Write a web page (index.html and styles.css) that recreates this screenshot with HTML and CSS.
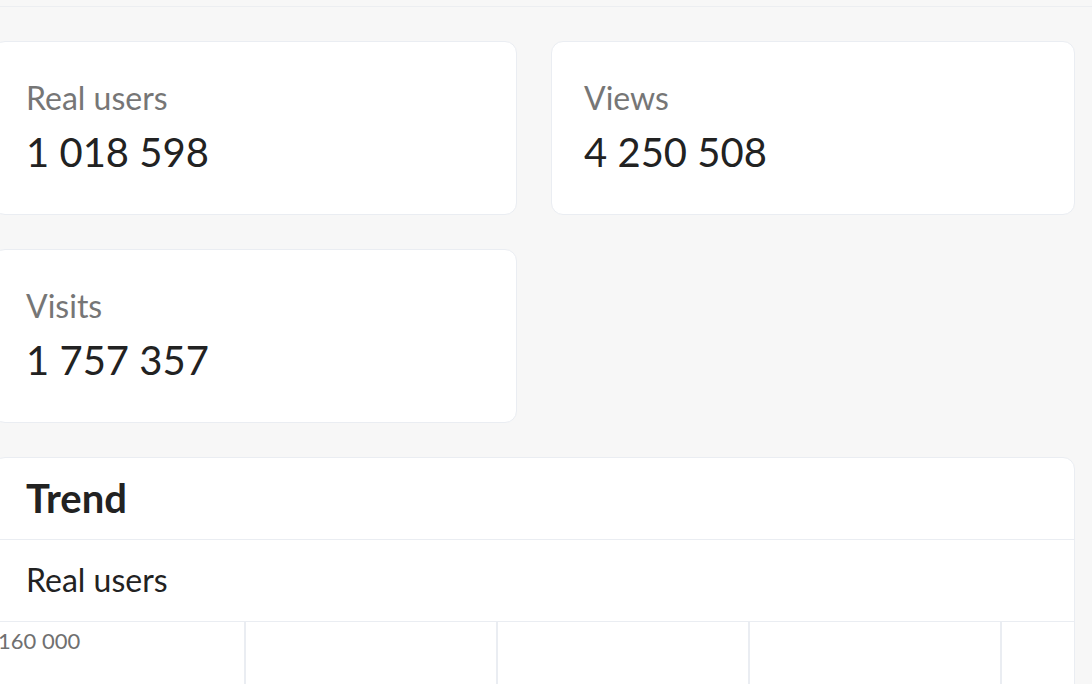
FILE: index.html
```html
<!DOCTYPE html>
<html lang="en">
<head>
    <meta charset="UTF-8">
    <meta name="viewport" content="width=device-width, initial-scale=1.0">
    <title>stats</title>
    <link rel="stylesheet" href="styles.css">
</head>
<body>
    <div class="topbar"></div>

    <div class="dashboard">
        <!-- Totals -->
        <div class="stats-grid">
            <div class="card stat">
                <div class="stat-label">Real users</div>
                <div class="stat-value">1 018 598</div>
            </div>
            <div class="card stat">
                <div class="stat-label">Views</div>
                <div class="stat-value">4 250 508</div>
            </div>
            <div class="card stat">
                <div class="stat-label">Visits</div>
                <div class="stat-value">1 757 357</div>
            </div>
        </div>

        <!-- Trend chart -->
        <div class="card trend">
            <h2 class="trend-title">Trend</h2>
            <div class="trend-metric">Real users</div>
            <div class="chart">
                <div class="axis-label">160 000</div>
            </div>
        </div>
    </div>
</body>
</html>
```

FILE: styles.css
```css
* {
    margin: 0;
    padding: 0;
    box-sizing: border-box;
}
body {
    font-family: 'Lato', 'Open Sans', sans-serif;
    background-color: #f7f7f7;
    color: #222;
    overflow: hidden;
}
.topbar {
    height: 7px;
    border-bottom: 1px solid #eceef1;
}
.dashboard {
    margin: 34px 17px 0 -7px;
}
.stats-grid {
    display: grid;
    grid-template-columns: 1fr 1fr;
    gap: 34px;
}
.card {
    background-color: #fff;
    border: 1px solid #eaedf2;
    border-radius: 12px;
}
.stat {
    padding: 37px 32px 38px;
}
.stat-label {
    font-size: 32px;
    line-height: 38px;
    color: #767676;
}
.stat-value {
    margin-top: 11px;
    font-size: 40px;
    line-height: 48px;
    color: #222;
}
.trend {
    margin-top: 34px;
    height: 300px;
    overflow: hidden;
}
.trend-title {
    padding: 16px 32px 0;
    height: 82px;
    font-size: 40px;
    line-height: 48px;
    font-weight: 700;
    border-bottom: 1px solid #eaedf2;
}
.trend-metric {
    padding: 20px 32px 0;
    height: 82px;
    font-size: 32px;
    line-height: 40px;
    border-bottom: 1px solid #eaedf2;
}
.chart {
    height: 200px;
    background-image: linear-gradient(to right, #eaedf2 2px, transparent 2px);
    background-size: 252px 100%;
    background-position: -2px 0;
    padding: 6px 0 0 4px;
}
.axis-label {
    font-size: 22px;
    line-height: 26px;
    color: #707070;
}
```
